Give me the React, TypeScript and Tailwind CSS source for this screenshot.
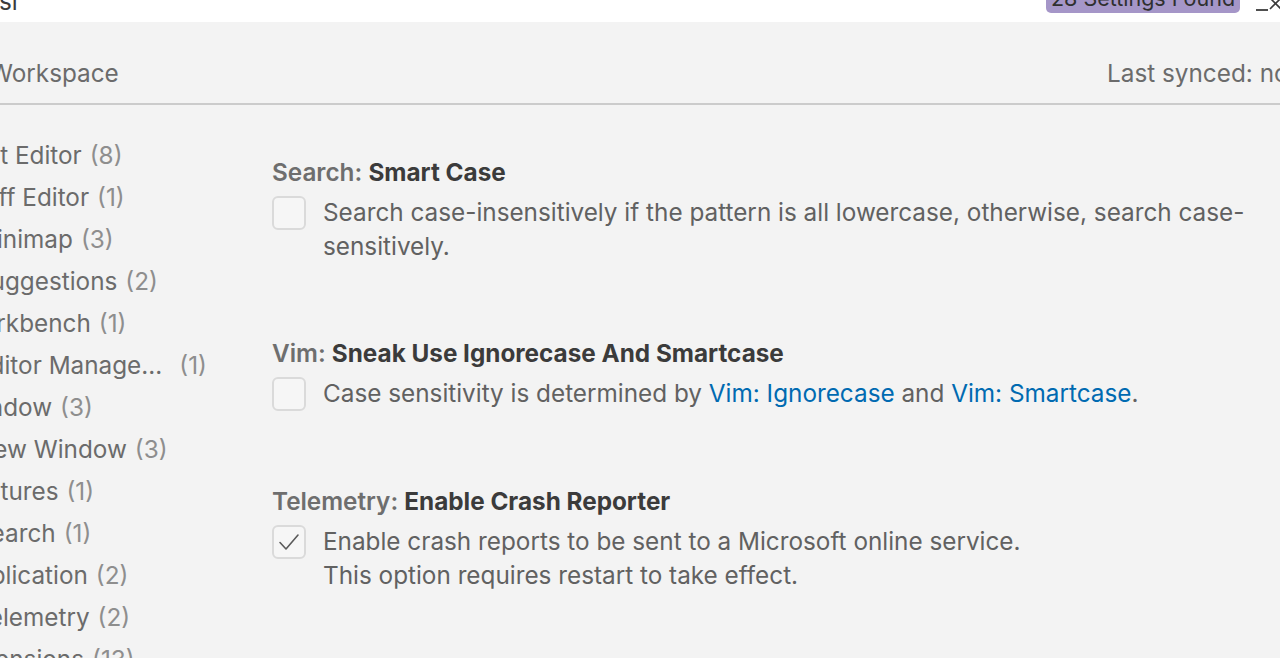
import React from "react";

interface TocItem {
  label: string;
  count: number;
  level: 1 | 2;
  truncate?: boolean;
}

const toc: TocItem[] = [
  { label: "Text Editor", count: 8, level: 1 },
  { label: "Diff Editor", count: 1, level: 2 },
  { label: "Minimap", count: 3, level: 2 },
  { label: "Suggestions", count: 2, level: 2 },
  { label: "Workbench", count: 1, level: 1 },
  { label: "Editor Manage...", count: 1, level: 2, truncate: true },
  { label: "Window", count: 3, level: 1 },
  { label: "New Window", count: 3, level: 2 },
  { label: "Features", count: 1, level: 1 },
  { label: "Search", count: 1, level: 2 },
  { label: "Application", count: 2, level: 1 },
  { label: "Telemetry", count: 2, level: 2 },
  { label: "Extensions", count: 13, level: 1 },
];

const Checkbox: React.FC<{ checked?: boolean }> = ({ checked }) => (
  <div className="w-[34px] h-[34px] shrink-0 rounded-[6px] border-2 border-[#dadada] bg-[#f6f6f6] flex items-center justify-center mt-[1px]">
    {checked && (
      <svg width="26" height="26" viewBox="0 0 26 26" fill="none">
        <path d="M4 13.5 L10 20 L22 6" stroke="#5a5a5a" strokeWidth="1.6" strokeLinecap="round" strokeLinejoin="round" />
      </svg>
    )}
  </div>
);

const Setting: React.FC<{
  category: string;
  name: string;
  checked?: boolean;
  children: React.ReactNode;
}> = ({ category, name, checked, children }) => (
  <div className="flex flex-col">
    <div className="leading-[34px] whitespace-nowrap">
      <span className="font-semibold text-[#6e6e6e]">{category}: </span>
      <span className="font-bold text-[#3b3b3b]">{name}</span>
    </div>
    <div className="flex gap-[17px] mt-[6px]">
      <Checkbox checked={checked} />
      <div className="flex-1 leading-[34px] text-[#616161] pr-[18px]">{children}</div>
    </div>
  </div>
);

export default function App() {
  return (
    <div
      className="w-[1280px] h-[658px] overflow-hidden bg-[#f3f3f3] flex flex-col text-[24.3px]"
      style={{ fontFamily: "Inter, 'Liberation Sans', sans-serif" }}
    >
      {/* search box, top cut off by the window */}
      <div className="h-[42px] -mt-[20px] shrink-0 bg-white flex items-end text-[#3b3b3b]">
        <span className="self-center -ml-[1px]">sl</span>
        <div className="ml-auto mb-[9px] h-[30px] w-[194px] rounded-[5px] bg-[#a596c8] flex items-center justify-center text-[21.5px] text-[#2f2f2f] whitespace-nowrap">
          28 Settings Found
        </div>
        <svg width="40" height="22" viewBox="0 0 40 22" fill="none" className="shrink-0">
          <path d="M16 10 H28" stroke="#3b3b3b" strokeWidth="1.8" />
          <path d="M30 9 L41 -2 M30 -2 L41 9" stroke="#3b3b3b" strokeWidth="1.6" />
        </svg>
      </div>

      {/* tabs header */}
      <div className="h-[81px] shrink-0 flex items-end pb-[15px] text-[#6b6b6b] leading-[30px] whitespace-nowrap">
        <span className="-ml-[11px]">Workspace</span>
        <span className="ml-auto -mr-[28px]">Last synced: now</span>
      </div>
      <div className="h-[2px] shrink-0 bg-[#cbcbcb]" />

      {/* body */}
      <div className="flex flex-1 min-h-0">
        <div className="w-[272px] shrink-0 pt-[29px] -ml-[41px] whitespace-nowrap">
          {toc.map((item) => (
            <div
              key={item.label}
              className={`h-[42px] flex items-center ${item.level === 2 ? "pl-[16px]" : "pl-[0px]"}`}
            >
              <span className="text-[#6b6b6b]">{item.label}</span>
              <span className={`text-[#8e8e8e] ${item.truncate ? "ml-[17px]" : "ml-[8px]"}`}>
                ({item.count})
              </span>
            </div>
          ))}
        </div>

        <div className="flex-1 flex flex-col gap-[73px] pt-[50px] ml-[41px]">
          <Setting category="Search" name="Smart Case">
            Search case-insensitively if the pattern is all lowercase, otherwise, search case-sensitively.
          </Setting>
          <Setting category="Vim" name="Sneak Use Ignorecase And Smartcase">
            Case sensitivity is determined by <span className="text-[#006ab1]">Vim: Ignorecase</span> and{" "}
            <span className="text-[#006ab1]">Vim: Smartcase</span>.
          </Setting>
          <Setting category="Telemetry" name="Enable Crash Reporter" checked>
            Enable crash reports to be sent to a Microsoft online service.
            <br />
            This option requires restart to take effect.
          </Setting>
        </div>
      </div>
    </div>
  );
}
